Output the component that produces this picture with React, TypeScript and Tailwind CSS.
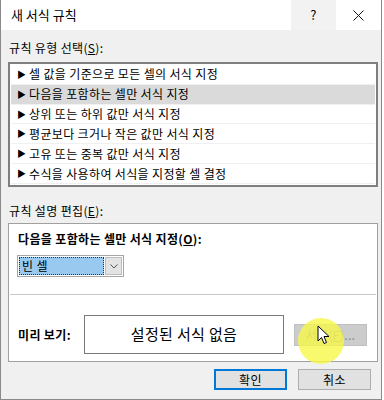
import React from 'react';

const rules = [
    '셀 값을 기준으로 모든 셀의 서식 지정',
    '다음을 포함하는 셀만 서식 지정',
    '상위 또는 하위 값만 서식 지정',
    '평균보다 크거나 작은 값만 서식 지정',
    '고유 또는 중복 값만 서식 지정',
    '수식을 사용하여 서식을 지정할 셀 결정',
];

const App: React.FC = () => {
    const selected = 1;

    return (
        <div className="w-[384px] h-[400px] bg-white font-['Noto_Sans_CJK_KR','Noto_Sans',sans-serif] text-[12px] tracking-[0.35px] text-black">
            <div className="relative w-[382px] h-[400px] flex flex-col border-x border-b border-[#8a8a8a] bg-[#f0f0f0]">
                {/* title bar */}
                <div className="h-[30px] flex items-center bg-white">
                    <span className="pl-[10px] text-[13px] tracking-normal flex-1">새 서식 규칙</span>
                    <div className="w-[45px] h-[30px] flex items-center justify-center bg-[#f2f2f2] text-[13px]">?</div>
                    <div className="w-[45px] h-[30px] flex items-center justify-center">
                        <svg width="11" height="11" viewBox="0 0 11 11">
                            <path d="M0.5 0.5 L10.5 10.5 M10.5 0.5 L0.5 10.5" stroke="#111" strokeWidth="1" />
                        </svg>
                    </div>
                </div>

                <div className="flex-1 flex flex-col px-[7px]">
                    <div className="mt-[10px] h-[16px] leading-[16px] pl-[1px]">
                        규칙 유형 선택(<span className="underline">S</span>):
                    </div>
                    <div className="mt-[6px] w-[370px] h-[125px] border-2 border-[#7f7f7f] bg-white flex flex-col py-[1px] px-[1px]">
                        {rules.map((r, i) => (
                            <div
                                key={r}
                                className={`h-[20px] flex items-center border-b border-[#f0f0f0] ${i === selected ? 'bg-[#dadada]' : ''}`}
                            >
                                <span className="w-[18px] pl-[6px] text-[9px] leading-none">▶</span>
                                <span className="leading-none">{r}</span>
                            </div>
                        ))}
                    </div>

                    <div className="mt-[16px] h-[16px] leading-[16px] pl-[1px]">
                        규칙 설명 편집(<span className="underline">E</span>):
                    </div>
                    <div className="mt-[4px] w-[370px] h-[139px] border border-[#a0a0a0] bg-white flex flex-col">
                        <div className="px-[9px] pt-[7px] font-bold h-[16px] leading-[16px] box-content">
                            다음을 포함하는 셀만 서식 지정(<span className="underline">O</span>):
                        </div>
                        <div className="mx-[8px] mt-[8px] w-[107px] h-[22px] border border-[#a6a6a6] flex p-[1px] bg-white">
                            <div className="flex-1 bg-[#99c9ef] border border-dotted border-[#333] flex items-center pl-[2px]">
                                빈 셀
                            </div>
                            <div className="w-[17px] ml-[1px] bg-[#e3e3e3] border border-[#bcbcbc] flex items-center justify-center">
                                <svg width="8" height="5" viewBox="0 0 8 5">
                                    <path d="M0.5 0.5 L4 4 L7.5 0.5" stroke="#555" fill="none" />
                                </svg>
                            </div>
                        </div>
                        <div className="mt-[17px] mx-[1px] h-px bg-[#c8c8c8]" />
                        <div className="flex items-center pl-[9px] mt-[20px]">
                            <span className="font-bold w-[66px]">미리 보기:</span>
                            <div className="w-[200px] h-[39px] border border-[#7a7a7a] flex items-center justify-center text-[15px]">
                                설정된 서식 없음
                            </div>
                            <div className="ml-[10px] w-[73px] h-[22px] border border-[#bfbfbf] bg-[#cccccc] flex items-center justify-center text-[#8a8a8a]">
                                서식(<span className="underline">F</span>)...
                            </div>
                        </div>
                    </div>

                    <div className="mt-[7px] flex justify-end gap-[11px] pr-[3px]">
                        <div className="w-[73px] h-[21px] border-2 border-[#0078d7] bg-[#e1e1e1] flex items-center justify-center">
                            확인
                        </div>
                        <div className="w-[73px] h-[21px] border border-[#adadad] bg-[#e1e1e1] flex items-center justify-center">
                            취소
                        </div>
                    </div>
                </div>

                {/* cursor highlight */}
                <div className="absolute left-[297px] top-[318px] w-[46px] h-[46px] rounded-full bg-[#f7f74a]/80 pointer-events-none" />
                <svg className="absolute left-[316px] top-[325px]" width="14" height="21" viewBox="0 0 14 21">
                    <path d="M1 1 L1 16 L4.5 12.5 L7 18.5 L9.5 17.5 L7 11.5 L12 11.5 Z" fill="white" stroke="black" strokeWidth="1" strokeLinejoin="round" />
                </svg>
            </div>
        </div>
    );
};

export default App;
